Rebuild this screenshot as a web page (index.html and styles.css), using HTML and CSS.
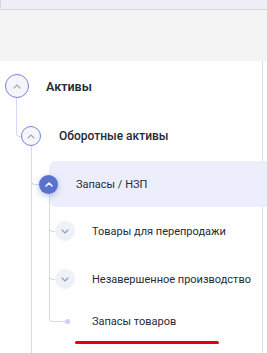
FILE: index.html
```html
<!DOCTYPE html>
<html>
<head>
    <title>Структура активов</title>
    <link rel="stylesheet" href="styles.css">
</head>
<body>
    <div class="topbar"></div>
    <div class="band"></div>

    <div class="panel">
        <ul class="tree">
            <li class="lvl1">
                <div class="row">
                    <span class="toggle outline big">
                        <svg width="8" height="5" viewBox="0 0 8 5"><path d="M1 4l3-3 3 3" fill="none" stroke="currentColor" stroke-width="1.1" stroke-linecap="round" stroke-linejoin="round"/></svg>
                    </span>
                    <span class="label strong">Активы</span>
                </div>
                <ul class="l2">
                    <li class="lvl2">
                        <div class="row">
                            <span class="toggle outline">
                                <svg width="8" height="5" viewBox="0 0 8 5"><path d="M1 4l3-3 3 3" fill="none" stroke="currentColor" stroke-width="1.1" stroke-linecap="round" stroke-linejoin="round"/></svg>
                            </span>
                            <span class="label medium">Оборотные активы</span>
                        </div>
                        <ul class="l3">
                            <li class="lvl3 more">
                                <div class="row active">
                                    <span class="toggle filled">
                                        <svg width="8" height="5" viewBox="0 0 8 5"><path d="M1 4l3-3 3 3" fill="none" stroke="currentColor" stroke-width="1.6" stroke-linecap="round" stroke-linejoin="round"/></svg>
                                    </span>
                                    <span class="label">Запасы / НЗП</span>
                                </div>
                                <ul class="l4">
                                    <li class="lvl4 more">
                                        <div class="row">
                                            <span class="toggle soft">
                                                <svg width="8" height="5" viewBox="0 0 8 5"><path d="M1 1l3 3 3-3" fill="none" stroke="currentColor" stroke-width="1.1" stroke-linecap="round" stroke-linejoin="round"/></svg>
                                            </span>
                                            <span class="label">Товары для перепродажи</span>
                                        </div>
                                    </li>
                                    <li class="lvl4 more">
                                        <div class="row">
                                            <span class="toggle soft">
                                                <svg width="8" height="5" viewBox="0 0 8 5"><path d="M1 1l3 3 3-3" fill="none" stroke="currentColor" stroke-width="1.1" stroke-linecap="round" stroke-linejoin="round"/></svg>
                                            </span>
                                            <span class="label">Незавершенное производство</span>
                                        </div>
                                    </li>
                                    <li class="lvl4 leaf">
                                        <div class="row">
                                            <span class="dot"></span>
                                            <span class="label">Запасы товаров</span>
                                        </div>
                                        <span class="mark"></span>
                                    </li>
                                </ul>
                            </li>
                        </ul>
                    </li>
                </ul>
            </li>
        </ul>
    </div>
</body>
</html>
```

FILE: styles.css
```css
html, body {
    overflow: hidden;
}
body {
    margin: 0;
    font-family: Roboto, "Liberation Sans", sans-serif;
    color: #262a36;
    background-color: #fff;
}
.topbar {
    height: 9px;
    background-color: #eff0f6;
    border-bottom: 1px solid #d6d7e1;
    border-left: 1px solid #d6d7e1;
}
.band {
    height: 51px;
    background-color: #f4f4f4;
}
.panel {
    width: 262px;
    height: calc(100vh - 61px);
    border-right: 1px solid #dcdde6;
    overflow-x: visible;
    overflow-y: clip;
}
ul {
    list-style: none;
    margin: 0;
    padding: 0;
}
.tree {
    padding-left: 5px;
}
.l2 { padding-left: 16px; }
.l3 { padding-left: 18px; }
.l4 { padding-left: 16px; }

li {
    position: relative;
}
.row {
    position: relative;
    display: flex;
    align-items: center;
}
.lvl1 > .row { height: 50px; }
.lvl2 > .row { height: 50px; }
.lvl3 > .row { height: 46px; }
.lvl4 > .row { height: 48px; }
.lvl4.leaf > .row { height: 36px; }

/* tree connectors */
.lvl2::before,
.lvl3::before,
.lvl4::before {
    content: "";
    position: absolute;
    top: -30px;
    box-sizing: border-box;
    border-left: 1px solid #d2d8f3;
    border-bottom: 1px solid #d2d8f3;
    border-bottom-left-radius: 4px;
}
.lvl2::before { left: -5px; width: 5px; height: 56px; }
.lvl3::before { left: -8px; width: 8px; height: 54px; }
.lvl4::before { left: -6px; width: 6px; height: 55px; }
.lvl4.leaf::before { width: 16px; height: 49px; }

.more::after {
    content: "";
    position: absolute;
    top: 0;
    bottom: 0;
    border-left: 1px solid #d2d8f3;
}
.lvl3.more::after { left: -8px; bottom: -14px; }
.lvl4.more::after { left: -6px; }

/* highlighted row */
.row.active::before {
    content: "";
    position: absolute;
    left: 10px;
    right: -5px;
    top: 0;
    bottom: 0;
    background-color: #eceffb;
    border-radius: 7px 0 0 7px;
}

.toggle {
    position: relative;
    z-index: 2;
    flex: none;
    box-sizing: border-box;
    width: 20px;
    height: 20px;
    border-radius: 50%;
    display: flex;
    align-items: center;
    justify-content: center;
}
.toggle.outline {
    border: 1.5px solid #7085d8;
    background-color: #f5f6fb;
    color: #a3a6b4;
}
.toggle.big {
    width: 24px;
    height: 24px;
}
.toggle.filled {
    width: 19px;
    height: 19px;
    background-color: #5a72cf;
    color: #fff;
    box-shadow: 0 2px 6px rgba(60, 80, 160, 0.35);
}
.toggle.soft {
    background-color: #f0f1f7;
    color: #8d98c9;
}
.dot {
    position: relative;
    z-index: 2;
    flex: none;
    width: 5px;
    height: 5px;
    margin-left: 10px;
    margin-right: 5px;
    border-radius: 50%;
    background-color: #c9d0f2;
}

.label {
    position: relative;
    z-index: 1;
    font-size: 11px;
    white-space: nowrap;
}
.lvl1 > .row .label { margin-left: 17px; }
.lvl2 > .row .label { margin-left: 18px; }
.lvl3 > .row .label { margin-left: 18px; }
.lvl4 > .row .label { margin-left: 17px; }
.label.strong {
    font-size: 12.5px;
    font-weight: 600;
}
.label.medium {
    font-size: 12px;
    font-weight: 500;
}

.mark {
    display: block;
    width: 144px;
    height: 3px;
    margin: 2px 0 0 20px;
    border-radius: 2px;
    background-color: #e6000a;
}
```
